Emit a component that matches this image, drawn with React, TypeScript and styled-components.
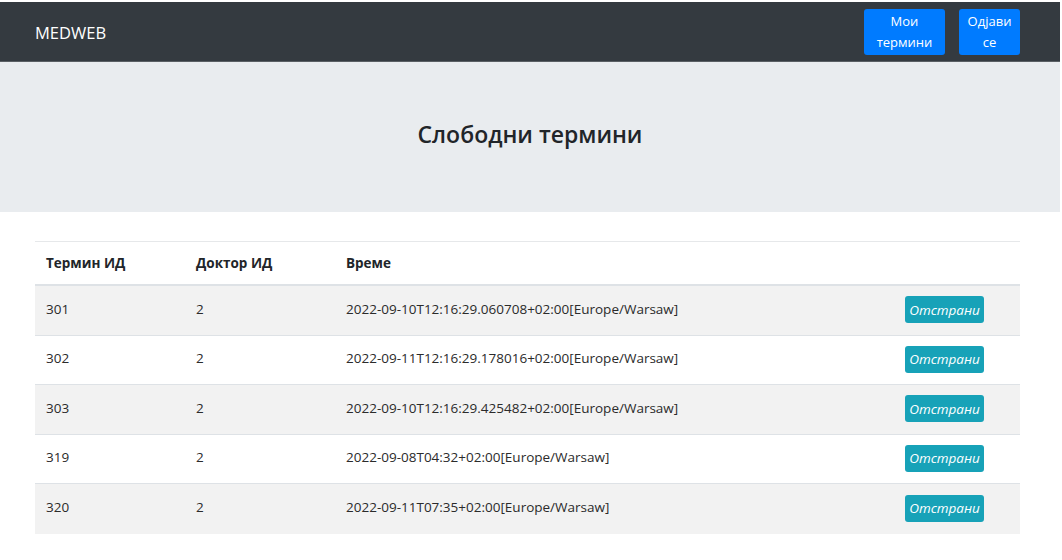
import styled, { createGlobalStyle } from 'styled-components';

const GlobalStyle = createGlobalStyle`
  *, *::before, *::after {
    box-sizing: border-box;
  }

  body {
    margin: 0;
    background: #fff;
    font-family: "Open Sans", "Noto Sans", sans-serif;
    color: #212529;
  }
`;

interface Appointment {
  id: number;
  doctorId: number;
  time: string;
}

const appointments: Appointment[] = [
  { id: 301, doctorId: 2, time: '2022-09-10T12:16:29.060708+02:00[Europe/Warsaw]' },
  { id: 302, doctorId: 2, time: '2022-09-11T12:16:29.178016+02:00[Europe/Warsaw]' },
  { id: 303, doctorId: 2, time: '2022-09-10T12:16:29.425482+02:00[Europe/Warsaw]' },
  { id: 319, doctorId: 2, time: '2022-09-08T04:32+02:00[Europe/Warsaw]' },
  { id: 320, doctorId: 2, time: '2022-09-11T07:35+02:00[Europe/Warsaw]' }
];

const App = () => {
  return (
    <StyledPage>
      <GlobalStyle />
      <StyledNavbar>
        <StyledBrand>MEDWEB</StyledBrand>
        <StyledNavActions>
          <StyledNavButton $width={81}>Мои термини</StyledNavButton>
          <StyledNavButton $width={61}>Одјави се</StyledNavButton>
        </StyledNavActions>
      </StyledNavbar>
      <StyledJumbotron>
        <StyledTitle>Слободни термини</StyledTitle>
      </StyledJumbotron>
      <StyledContainer>
        <StyledTable>
          <StyledHeadRow>
            <StyledHeadCell>Термин ИД</StyledHeadCell>
            <StyledHeadCell>Доктор ИД</StyledHeadCell>
            <StyledHeadCell>Време</StyledHeadCell>
            <StyledHeadCell />
          </StyledHeadRow>
          {appointments.map((a, i) => (
            <StyledRow key={a.id} $striped={i % 2 === 0}>
              <StyledCell>{a.id}</StyledCell>
              <StyledCell>{a.doctorId}</StyledCell>
              <StyledCell>{a.time}</StyledCell>
              <StyledCell>
                <StyledRemoveButton>Отстрани</StyledRemoveButton>
              </StyledCell>
            </StyledRow>
          ))}
        </StyledTable>
      </StyledContainer>
    </StyledPage>
  );
};

export default App;

const StyledPage = styled.div`
  width: 1060px;
  padding-top: 2px;
  min-height: 558px;
`;

const StyledNavbar = styled.nav`
  height: 60px;
  background: #343a40;
  display: flex;
  align-items: center;
  justify-content: space-between;
  padding: 0 40px 0 35px;
  border-bottom: 1px solid #5a5f64;
`;

const StyledBrand = styled.div`
  color: #fff;
  font-size: 16.5px;
  margin-top: 2px;
`;

const StyledNavActions = styled.div`
  display: flex;
  gap: 14px;
  margin-top: 1px;
`;

const StyledNavButton = styled.button<{ $width: number }>`
  width: ${props => props.$width}px;
  height: 46px;
  background: #007bff;
  color: #fff;
  border: none;
  border-radius: 3px;
  font-family: inherit;
  font-size: 13px;
  line-height: 21px;
  padding: 0 4px;
  text-align: center;
`;

const StyledJumbotron = styled.header`
  height: 150px;
  background: #e9ecef;
  display: flex;
  align-items: center;
  justify-content: center;
`;

const StyledTitle = styled.h1`
  margin: 0 0 7px;
  font-size: 23px;
  font-weight: 600;
  color: #212529;
`;

const StyledContainer = styled.main`
  padding: 29px 40px 0 35px;
`;

const StyledTable = styled.div`
  display: grid;
  grid-template-columns: 150px 150px 558px 1fr;
  border-top: 1px solid #e6e8ea;
  font-size: 13.5px;
`;

const StyledHeadRow = styled.div`
  display: contents;
`;

const StyledHeadCell = styled.div`
  height: 44px;
  padding: 0 11px 1px;
  display: flex;
  align-items: center;
  font-weight: 700;
  font-size: 13.5px;
  border-bottom: 2px solid #dee2e6;
`;

const StyledRow = styled.div<{ $striped: boolean }>`
  display: contents;

  & > div {
    background: ${props => (props.$striped ? '#f2f2f2' : '#fff')};
  }

  &:not(:last-child) > div {
    border-bottom: 1px solid #dee2e6;
  }
`;

const StyledCell = styled.div`
  height: 49.5px;
  padding: 0 11px 3px;
  display: flex;
  align-items: center;
  color: #2b2b2b;
`;

const StyledRemoveButton = styled.button`
  margin: 2px 0 0 1px;
  background: #17a2b8;
  color: #fff;
  border: none;
  border-radius: 3px;
  font-family: inherit;
  font-style: italic;
  font-size: 13.5px;
  height: 27px;
  width: 79px;
  padding: 0;
`;
